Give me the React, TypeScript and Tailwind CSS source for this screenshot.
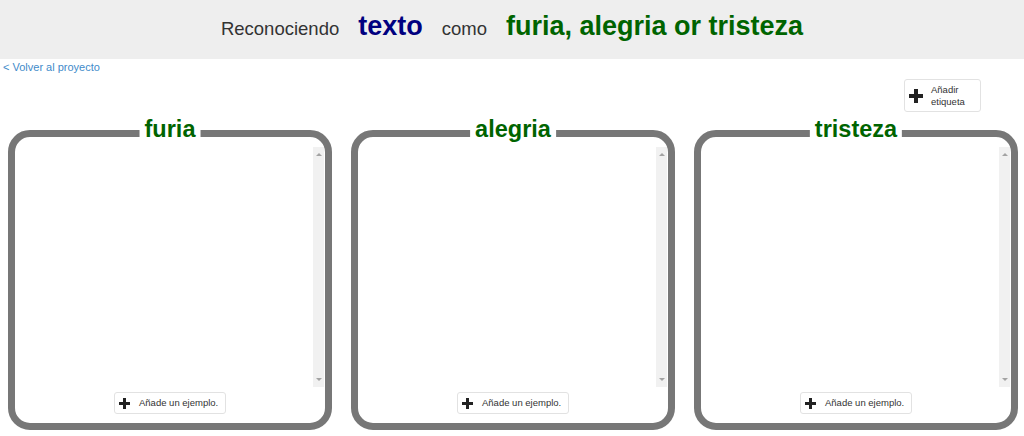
import React from "react"

const labels = ["furia", "alegria", "tristeza"]

function Plus({ size, bar }: { size: number; bar: number }) {
    const off = (size - bar) / 2
    return (
        <svg width={size} height={size} viewBox={`0 0 ${size} ${size}`} className="shrink-0">
            <rect x={off} y={0} width={bar} height={size} fill="#222" />
            <rect x={0} y={off} width={size} height={bar} fill="#222" />
        </svg>
    )
}

function LabelBox({ label }: { label: string }) {
    return (
        <div className="relative h-[300px] w-[324px] shrink-0 rounded-[22px] border-[7px] border-[#777] bg-white">
            <div className="absolute left-1/2 top-[-19px] -translate-x-1/2 bg-white px-[5px] text-[23.5px] font-bold leading-none text-[#006400]">
                {label}
            </div>
            <div className="flex h-full flex-col items-center pt-[10px]">
                <div className="flex h-[240px] w-full justify-end pr-[1px]">
                    <div className="flex h-full w-[11px] flex-col items-center justify-between bg-[#f1f1f1] py-[6px]">
                        <div className="h-0 w-0 border-x-[3px] border-b-[3px] border-x-transparent border-b-[#a3a3a3]" />
                        <div className="h-0 w-0 border-x-[3px] border-t-[3px] border-x-transparent border-t-[#a3a3a3]" />
                    </div>
                </div>
                <button className="mt-[5px] flex h-[22px] w-[112px] items-center gap-[9px] rounded-[3px] border border-[#e2e2e2] bg-white pl-[4px] text-[9.5px] text-[#333]">
                    <Plus size={11} bar={3} />
                    <span>Añade un ejemplo.</span>
                </button>
            </div>
        </div>
    )
}

export default function App() {
    return (
        <div className="h-[436px] w-[1024px] overflow-hidden bg-white font-['Liberation_Sans',Arial,sans-serif]">
            <div className="flex h-[59px] items-baseline justify-center gap-[19px] bg-[#eeeeee] pt-[13px] leading-none">
                <span className="text-[18.5px] text-[#333]">Reconociendo</span>
                <span className="text-[27px] font-bold text-[#000080]">texto</span>
                <span className="text-[18.5px] text-[#333]">como</span>
                <span className="text-[27px] font-bold text-[#006400]">furia, alegria or tristeza</span>
            </div>
            <div className="mt-[1px] pl-[3px] text-[11px] leading-[14px] text-[#428bca]">
                &lt; Volver al proyecto
            </div>
            <div className="mt-[5px] flex justify-end pr-[43px]">
                <button className="flex h-[33px] w-[77px] items-center gap-[8px] rounded-[3px] border border-[#e2e2e2] bg-white pl-[4px] text-left text-[9.5px] leading-[12px] text-[#333]">
                    <Plus size={14} bar={4} />
                    <span>Añadir<br />etiqueta</span>
                </button>
            </div>
            <div className="mt-[18px] flex gap-[19px] pl-[8px]">
                {labels.map(l => (
                    <LabelBox key={l} label={l} />
                ))}
            </div>
        </div>
    )
}
